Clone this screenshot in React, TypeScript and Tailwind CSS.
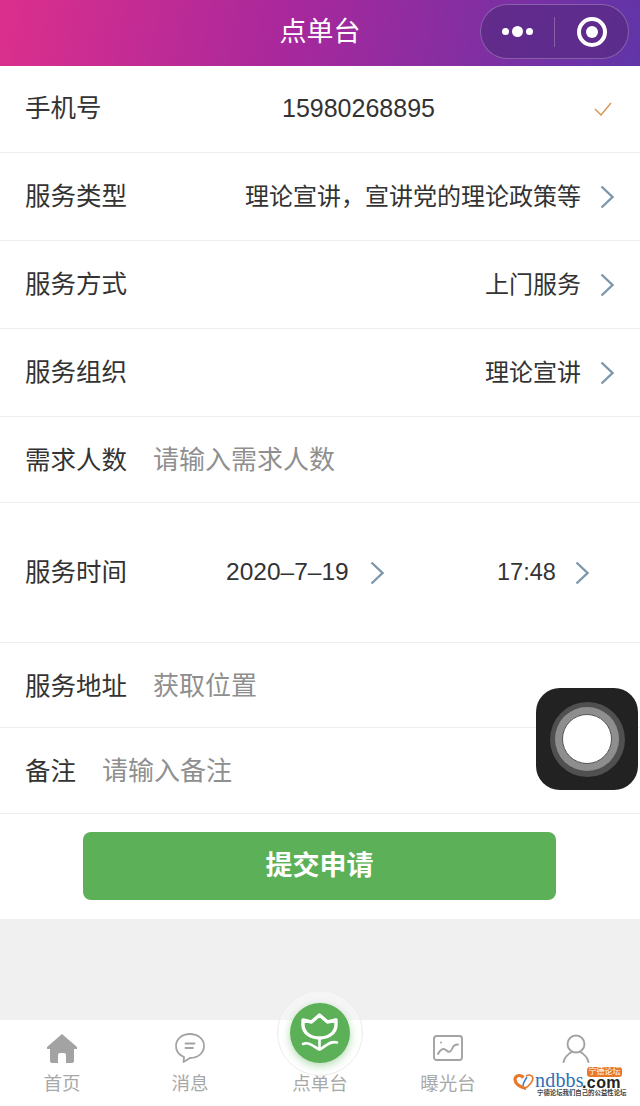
import type { ReactNode } from 'react';

const cjk = { fontFamily: '"Liberation Sans", "Noto Sans CJK SC", sans-serif' };

function Arrow() {
  return (
    <svg className="w-[14px] h-[24px] shrink-0" viewBox="0 0 14 24" fill="none" stroke="#7f97aa" strokeWidth={2.4}>
      <polyline points="1.5,1.5 12.5,12 1.5,22.5" />
    </svg>
  );
}

const selectRows = [
  { label: '服务类型', value: '理论宣讲，宣讲党的理论政策等' },
  { label: '服务方式', value: '上门服务' },
  { label: '服务组织', value: '理论宣讲' },
];

const homeIcon = (
  <svg className="w-[30px] h-[29px]" viewBox="0 0 30 29" fill="#a3a3a3">
    <path
      fillRule="evenodd"
      d="M15 0 L30 13 V15 H27 V27 Q27 29 25 29 H19 V21 Q19 19 17 19 H13 Q11 19 11 21 V29 H5 Q3 29 3 27 V15 H0 V13 Z"
    />
  </svg>
);

const chatIcon = (
  <svg className="w-[30px] h-[30px]" viewBox="0 0 30 30" fill="none" stroke="#a3a3a3" strokeWidth={1.8} strokeLinecap="round" strokeLinejoin="round">
    <path d="M9 24 C4 22 1 18 1 13 C1 6 7 1 15 1 C23 1 29 6 29 13 C29 20 23 25 15 25 L8.5 29 Z" />
    <path d="M10.5 10.5 H19.5 M10.5 15 H18" />
  </svg>
);

const photoIcon = (
  <svg className="w-[30px] h-[26px]" viewBox="0 0 30 26" fill="none" stroke="#a3a3a3" strokeWidth={1.9} strokeLinecap="round">
    <rect x="1" y="1" width="28" height="24" rx="2.5" />
    <path d="M5 19 C8 13 11 13 13.5 15.5 C16 18 18 17 19.5 13 C20.5 10.5 22 9.5 25 9.5" />
    <circle cx="8" cy="7.5" r="1" fill="#a3a3a3" stroke="none" />
  </svg>
);

const personIcon = (
  <svg className="w-[28px] h-[29px]" viewBox="0 0 28 29" fill="none" stroke="#a3a3a3" strokeWidth={1.9} strokeLinecap="round">
    <circle cx="14" cy="10" r="8.5" />
    <path d="M1.5 28 C3 22 7 19.5 9.5 18 M26.5 28 C25 22 21 19.5 18.5 18" />
  </svg>
);

function Tab({ label, icon, className }: { label?: string; icon?: ReactNode; className?: string }) {
  return (
    <div className={`w-[128px] shrink-0 flex flex-col items-center pt-[13px] ${className ?? ''}`}>
      <div className="h-[30px] flex items-center justify-center">{icon}</div>
      <span className="h-[26px] mt-[8px] text-[18.5px] leading-[26px] text-[#a8a8a8]">{label}</span>
    </div>
  );
}

export default function App() {
  return (
    <div className="relative w-[640px] h-[1106px] bg-[#f0f0f0] overflow-hidden flex flex-col" style={cjk}>
      <header className="relative h-[66px] shrink-0 flex items-center justify-center pb-[2px] bg-[linear-gradient(100deg,#dc2f8c_0%,#a8289c_45%,#6035a8_100%)]">
        <span className="text-white text-[27px]">点单台</span>
        <div className="absolute right-[11px] top-[4px] w-[149px] h-[55px] rounded-full bg-[#5a2a86]/80 border border-white/25 flex items-center">
          <div className="flex-1 flex items-center justify-center gap-[3px]">
            <span className="w-[7px] h-[7px] rounded-full bg-white" />
            <span className="w-[11px] h-[11px] rounded-full bg-white" />
            <span className="w-[7px] h-[7px] rounded-full bg-white" />
          </div>
          <div className="w-px h-[30px] bg-white/25" />
          <div className="flex-1 flex items-center justify-center">
            <span className="w-[30px] h-[30px] rounded-full border-[4px] border-white flex items-center justify-center">
              <span className="w-[12px] h-[12px] rounded-full bg-white" />
            </span>
          </div>
        </div>
      </header>

      <main className="bg-white shrink-0 text-[#333] text-[25.5px]">
        <div className="h-[87px] flex items-center pl-[25px] pr-[28px] pb-[1px] border-b border-[#efefef]">
          <span className="w-[257px]">手机号</span>
          <span className="flex-1 text-[25px]">15980268895</span>
          <svg className="w-[18px] h-[14px]" viewBox="0 0 18 14" fill="none" stroke="#d9985a" strokeWidth={1.5}>
            <polyline points="1,7 7,13 17,1" />
          </svg>
        </div>
        {selectRows.map((row) => (
          <div key={row.label} className="h-[88px] flex items-center pl-[25px] pr-[26px] border-b border-[#efefef]">
            <span className="flex-1">{row.label}</span>
            <span className="text-[24px] mr-[19px]">{row.value}</span>
            <Arrow />
          </div>
        ))}
        <div className="h-[86px] flex items-center pl-[25px] pt-[2px] border-b border-[#efefef]">
          <span className="w-[128px]">需求人数</span>
          <span className="text-[#8f8f8f] text-[26px]">请输入需求人数</span>
        </div>
        <div className="h-[140px] flex items-center pl-[25px] border-b border-[#efefef]">
          <span className="w-[201px]">服务时间</span>
          <span className="w-[144px] text-[24.5px]">2020–7–19</span>
          <Arrow />
          <span className="ml-[113px] w-[78px] text-[23.5px]">17:48</span>
          <Arrow />
        </div>
        <div className="h-[85px] flex items-center pl-[25px] pt-[2px] border-b border-[#efefef]">
          <span className="w-[128px]">服务地址</span>
          <span className="text-[#8f8f8f] text-[26px]">获取位置</span>
        </div>
        <div className="h-[86px] flex items-center pl-[25px] pt-[2px] border-b border-[#efefef]">
          <span className="w-[77px]">备注</span>
          <span className="text-[#8f8f8f] text-[26px]">请输入备注</span>
        </div>
        <div className="h-[105px] flex justify-center pt-[18px] pr-[1px]">
          <div className="w-[473px] h-[68px] rounded-[8px] bg-[#5cb158] text-white font-bold text-[27px] flex items-center justify-center">
            提交申请
          </div>
        </div>
      </main>

      <div className="flex-1" />

      <nav className="h-[86px] shrink-0 bg-white flex">
        <Tab label="首页" icon={homeIcon} className="pr-[4px]" />
        <Tab label="消息" icon={chatIcon} className="pr-[4px]" />
        <Tab label="点单台" />
        <Tab label="曝光台" icon={photoIcon} />
        <Tab icon={personIcon} />
      </nav>

      {/* middle tab button sticks out above the bar */}
      <div className="absolute left-[277px] top-[990px] w-[86px] h-[86px] rounded-full border border-[#ececec] bg-[linear-gradient(180deg,#f5f5f5_0%,#f5f5f5_35%,#ffffff_35%,#ffffff_100%)] flex items-center justify-center">
        <div className="w-[60px] h-[60px] rounded-full bg-[#5cb158] shadow-[0_3px_8px_rgba(92,177,88,0.45)]">
          <svg className="w-[60px] h-[60px]" viewBox="0 0 60 60" fill="none" stroke="#fff" strokeWidth={3.4} strokeLinecap="round" strokeLinejoin="round">
            <path d="M13 17 L21.5 19 L29.5 12 L37.5 19 L46 17 V22 C46 30 38 35 29.5 35 C21 35 13 30 13 22 Z" />
            <path d="M29.5 35 V46" strokeWidth={2.6} />
            <path d="M13 41 C19 38 24 44 29.5 46.5 C35 44 40 37 47 39.5" strokeWidth={2.6} />
          </svg>
        </div>
      </div>

      {/* assistive touch */}
      <div className="absolute left-[536px] top-[688px] w-[102px] h-[102px] rounded-[24px] bg-[#222] flex items-center justify-center">
        <div className="w-[75px] h-[75px] rounded-full bg-[#505050] flex items-center justify-center">
          <div className="w-[64px] h-[64px] rounded-full bg-[#8e8e8e] flex items-center justify-center">
            <div className="w-[50px] h-[50px] rounded-full bg-white border border-[#555]" />
          </div>
        </div>
      </div>

      {/* ndbbs watermark */}
      <div className="absolute left-[513px] top-[1067px] w-[113px] h-[30px]">
        <svg className="absolute left-0 top-[6px] w-[22px] h-[17px]" viewBox="0 0 22 17" fill="none" stroke="#e8792b" strokeWidth={3.2}>
          <path d="M13 15.5 C6 14 2 10 2 6.5 C2 2.5 7 1 10.5 4.5" />
          <path d="M14 4 C12 7 10 10 10 13" stroke="#3a7fc4" strokeWidth={1.5} />
          <path d="M13 3 C17 0.5 21 3 19.5 7 C18.5 10 16 12.5 13 15" stroke="#e8792b" strokeWidth={1.6} />
        </svg>
        <span className="absolute left-[22px] top-[5px] text-[20px] leading-[17px] font-['Liberation_Serif'] text-[#2f6fb5] tracking-[0.2px]">
          ndbbs
        </span>
        <span className="absolute left-[69px] top-[10px] text-[16px] leading-[12px] font-bold text-[#222] tracking-[0.4px]">
          .com
        </span>
        <span className="absolute left-[74px] top-0 w-[35px] h-[10px] rounded-[3px] bg-[#e8792b] text-white text-[8px] leading-[10px] text-center">
          宁德论坛
        </span>
        <span className="absolute left-[24px] top-[22px] text-[6.4px] leading-[8px] font-bold text-[#444] whitespace-nowrap">
          宁德论坛我们自己的公益性论坛
        </span>
      </div>
    </div>
  );
}
